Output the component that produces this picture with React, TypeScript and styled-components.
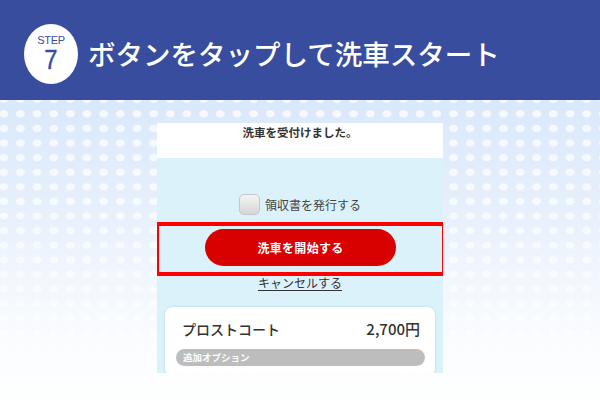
import React from 'react'
import styled, { createGlobalStyle } from 'styled-components'

const GlobalStyle = createGlobalStyle`
  html, body {
    margin: 0;
    padding: 0;
  }
  body {
    width: 600px;
    height: 400px;
    overflow: hidden;
    font-family: 'Noto Sans CJK JP', 'Noto Sans', sans-serif;
  }
`

const Page = styled.div`
  width: 600px;
  height: 400px;
  display: flex;
  flex-direction: column;
`

const Header = styled.header`
  height: 100px;
  flex-shrink: 0;
  background: #394d9f;
  display: flex;
  align-items: center;
  padding: 8px 0 0 24px;
  gap: 10px;
  box-sizing: border-box;
`

const StepBadge = styled.div`
  width: 54px;
  height: 60px;
  border-radius: 50%;
  background: #fff;
  color: #394d9f;
  display: flex;
  flex-direction: column;
  align-items: center;
  justify-content: center;
  font-family: 'Liberation Sans', Arial, sans-serif;
  line-height: 1;
`

const StepLabel = styled.span`
  font-size: 11px;
  letter-spacing: -0.3px;
`

const StepNumber = styled.span`
  font-size: 28px;
  transform: scaleX(0.85);
  -webkit-text-stroke: 0.4px #394d9f;
`

const Title = styled.h1`
  margin: 0;
  color: #fff;
  font-size: 27.5px;
  font-weight: 500;
  line-height: 1;
`

const Stage = styled.main`
  flex: 1;
  display: flex;
  justify-content: center;
  padding-top: 23px;
  box-sizing: border-box;
  background-color: #fff;
  background-image:
    linear-gradient(to bottom, rgba(255, 255, 255, 0) 0%, rgba(255, 255, 255, 0.15) 40%, rgba(255, 255, 255, 0.85) 100%),
    radial-gradient(ellipse 4.6px 4px at 50% 50%, rgba(247, 250, 255, 0.95) 88%, rgba(247, 250, 255, 0) 100%),
    linear-gradient(to bottom, #dae8fb 0%, #e6f0fc 50%, #f8fbff 100%);
  background-size: 100% 100%, 16.67px 14.6px, 100% 100%;
  background-position: 0 0, -4.6px -8px, 0 0;
`

const Phone = styled.section`
  width: 286px;
  height: 250px;
  display: flex;
  flex-direction: column;
  overflow: hidden;

  & > * {
    flex-shrink: 0;
  }
`

const Notice = styled.div`
  height: 35px;
  background: #fff;
  text-align: center;
  font-size: 11.5px;
  font-weight: 700;
  color: #333;
  line-height: 14px;
  padding-top: 2px;
  box-sizing: border-box;
`

const Body = styled.div`
  flex: 1;
  background: #dcf2fb;
  display: flex;
  flex-direction: column;
  align-items: center;
  padding: 36px 8px 0;

  & > * {
    flex-shrink: 0;
  }
`

const CheckRow = styled.label`
  display: flex;
  align-items: center;
  gap: 5px;
  height: 21px;
  font-size: 12px;
  color: #444;
`

const CheckBox = styled.span`
  width: 21px;
  height: 21px;
  border-radius: 5px;
  border: 1px solid #c4c8cc;
  background: linear-gradient(to bottom, #f4f4f4, #d6d6d6);
  box-sizing: border-box;
`

const Highlight = styled.div`
  align-self: stretch;
  margin: 7px -11px 0 -10px;
  border: 4px solid #ff0000;
  padding: 3px 0 6px;
  display: flex;
  justify-content: center;
`

const StartButton = styled.button`
  width: 191px;
  height: 37px;
  border: none;
  border-radius: 19px;
  background: #d90000;
  color: #fff;
  font-family: inherit;
  font-size: 12px;
  font-weight: 700;
  letter-spacing: 0.3px;
  padding: 0;
`

const CancelLink = styled.a`
  font-size: 12px;
  line-height: 14px;
  color: #333;
  text-decoration: underline;
  text-underline-offset: 2px;
`

const Card = styled.div`
  align-self: stretch;
  margin-top: 17px;
  background: #fff;
  border-radius: 8px;
  box-shadow: 0 0 3px rgba(120, 160, 190, 0.35);
  padding: 14px 10px 10px 11px;
`

const CourseRow = styled.div`
  display: flex;
  justify-content: space-between;
  align-items: center;
  padding: 0 5px 0 6px;
  font-size: 14px;
  font-weight: 500;
  color: #333;
  line-height: 16px;
`

const Price = styled.span`
  font-size: 15px;
`

const OptionPill = styled.div`
  margin-top: 12px;
  height: 17px;
  border-radius: 9px;
  background: #bdbdbd;
  color: #fff;
  font-size: 9.5px;
  font-weight: 700;
  line-height: 17px;
  padding-left: 7px;
`

export default function App() {
  return (
    <Page>
      <GlobalStyle />
      <Header>
        <StepBadge>
          <StepLabel>STEP</StepLabel>
          <StepNumber>7</StepNumber>
        </StepBadge>
        <Title>ボタンをタップして洗車スタート</Title>
      </Header>
      <Stage>
        <Phone>
          <Notice>洗車を受付けました。</Notice>
          <Body>
            <CheckRow>
              <CheckBox />
              領収書を発行する
            </CheckRow>
            <Highlight>
              <StartButton>洗車を開始する</StartButton>
            </Highlight>
            <CancelLink>キャンセルする</CancelLink>
            <Card>
              <CourseRow>
                <span>プロストコート</span>
                <Price>2,700円</Price>
              </CourseRow>
              <OptionPill>追加オプション</OptionPill>
            </Card>
          </Body>
        </Phone>
      </Stage>
    </Page>
  )
}
